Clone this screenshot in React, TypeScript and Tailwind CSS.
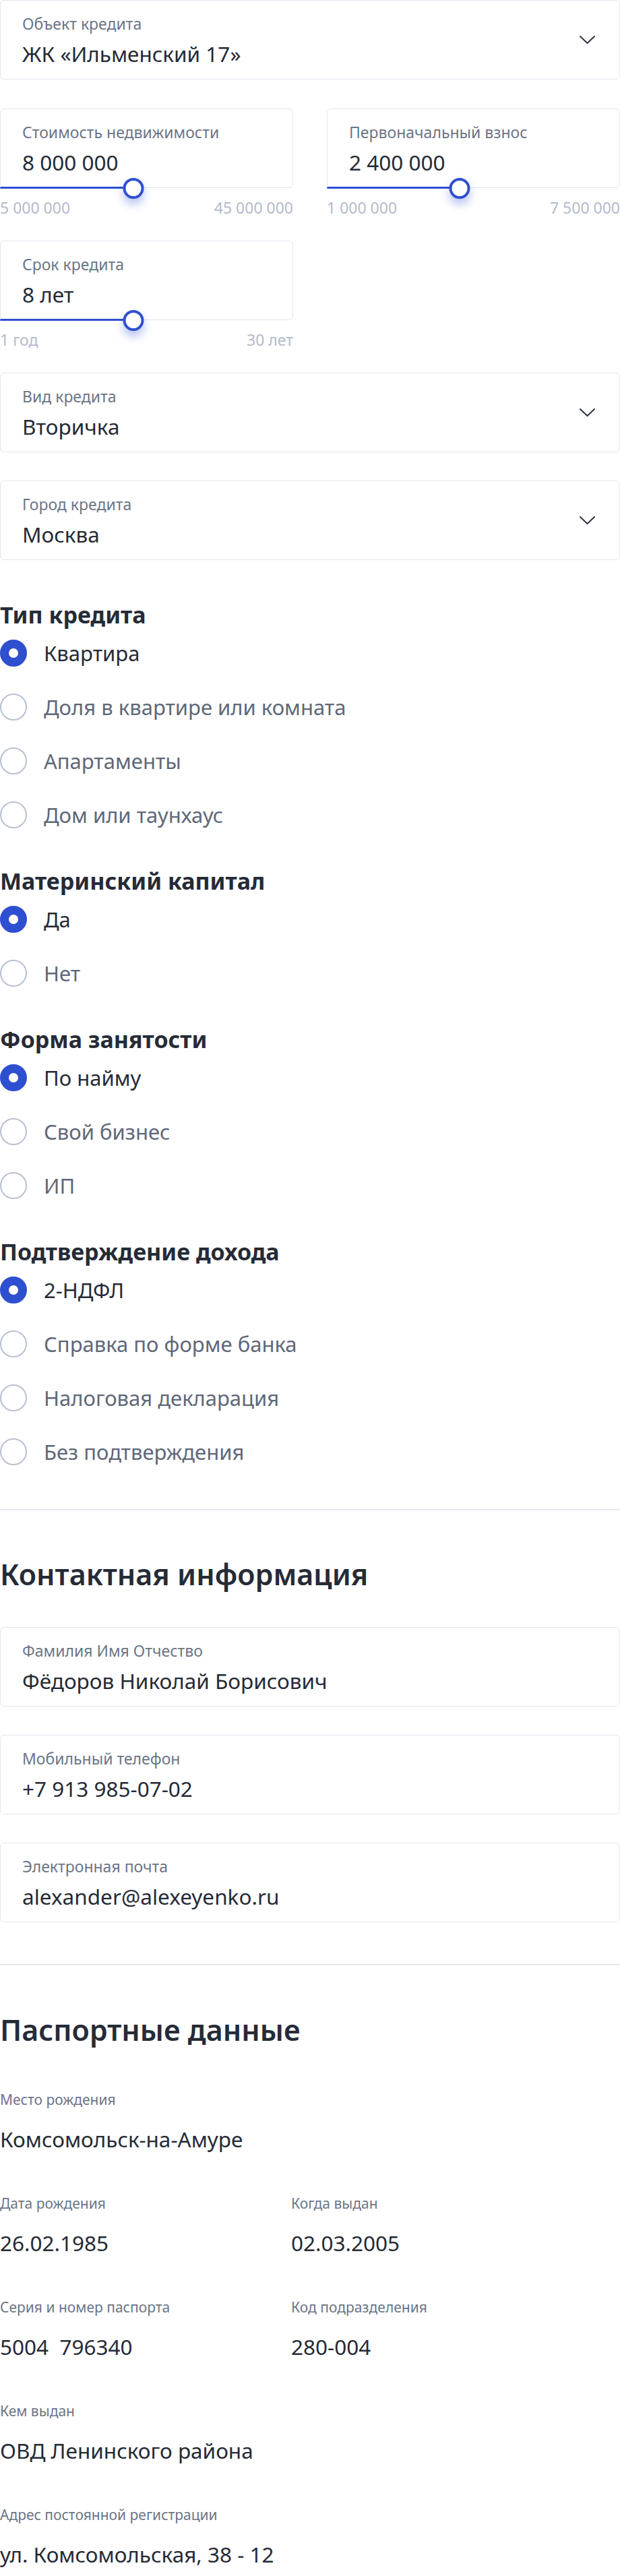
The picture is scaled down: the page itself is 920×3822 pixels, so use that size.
import React from "react";

const font = { fontFamily: '"Noto Sans", "Open Sans", sans-serif' };

function Chevron() {
  return (
    <svg width="23" height="12" viewBox="0 0 23 12" fill="none" className="shrink-0">
      <path d="M1 1L11.5 11L22 1" stroke="#2d3340" strokeWidth="2" strokeLinecap="round" strokeLinejoin="round" />
    </svg>
  );
}

function Field({ label, value, select = false }: { label: string; value: string; select?: boolean }) {
  return (
    <div className="flex h-[118px] items-center justify-between rounded-md border border-[#e1e5ee] bg-white pl-8 pr-[36px]">
      <div className="mt-[3px] flex flex-col">
        <span className="text-[23px] leading-[30px] text-[#6b7586]">{label}</span>
        <span className="mt-[9px] text-[31.5px] leading-[42px] text-[#262b36]">{value}</span>
      </div>
      {select && <Chevron />}
    </div>
  );
}

function SliderField({
  label,
  value,
  min,
  max,
  fraction,
}: {
  label: string;
  value: string;
  min: string;
  max: string;
  fraction: number;
}) {
  const pct = `${fraction * 100}%`;
  return (
    <div className="flex flex-col">
      <div className="relative">
        <Field label={label} value={value} />
        <div className="absolute bottom-[-1px] left-0 h-[3px] rounded-full bg-[#2f4fd1]" style={{ width: pct }} />
        <div
          className="absolute bottom-[-16px] h-[31px] w-[31px] -translate-x-1/2 rounded-full border-[4px] border-[#2f4fd1] bg-white shadow-[0_8px_14px_rgba(47,79,209,0.35)]"
          style={{ left: pct }}
        />
      </div>
      <div className="mt-[14px] flex justify-between text-[23px] leading-[30px] text-[#b3bbca]">
        <span>{min}</span>
        <span>{max}</span>
      </div>
    </div>
  );
}

function Radio({ label, checked }: { label: string; checked: boolean }) {
  return (
    <div className="flex h-[80px] items-center gap-[25px]">
      {checked ? (
        <span className="h-[40px] w-[40px] shrink-0 rounded-full border-[13px] border-[#2f4fd1] bg-white" />
      ) : (
        <span className="h-[40px] w-[40px] shrink-0 rounded-full border-2 border-[#b9c1d0] bg-white" />
      )}
      <span className={`text-[31px] leading-[40px] ${checked ? "text-[#262b36]" : "text-[#5f6878]"}`}>{label}</span>
    </div>
  );
}

function RadioGroup({ title, options, selected, first = false }: { title: string; options: string[]; selected: number; first?: boolean }) {
  return (
    <div className={first ? "mt-[64px]" : "mt-[41px]"}>
      <h3 className="text-[34px] font-bold leading-[34px] text-[#262b36]">{title}</h3>
      {options.map((o, i) => (
        <Radio key={o} label={o} checked={i === selected} />
      ))}
    </div>
  );
}

function Info({ label, value }: { label: string; value: string }) {
  return (
    <div className="flex flex-col">
      <span className="text-[21px] leading-[28px] text-[#6b7586]">{label}</span>
      <span className="mt-[25px] whitespace-pre text-[31.5px] leading-[40px] text-[#262b36]">{value}</span>
    </div>
  );
}

export default function App() {
  return (
    <div className="w-[920px] bg-white pb-[14px]" style={font}>
      <Field label="Объект кредита" value="ЖК «Ильменский 17»" select />

      <div className="mt-[43px] grid grid-cols-2 gap-x-[50px]">
        <SliderField label="Стоимость недвижимости" value="8 000 000" min="5 000 000" max="45 000 000" fraction={0.455} />
        <SliderField label="Первоначальный взнос" value="2 400 000" min="1 000 000" max="7 500 000" fraction={0.453} />
      </div>

      <div className="mt-[34px] grid grid-cols-2 gap-x-[50px]">
        <SliderField label="Срок кредита" value="8 лет" min="1 год" max="30 лет" fraction={0.455} />
      </div>

      <div className="mt-[34px]">
        <Field label="Вид кредита" value="Вторичка" select />
      </div>
      <div className="mt-[42px]">
        <Field label="Город кредита" value="Москва" select />
      </div>

      <RadioGroup
        first
        title="Тип кредита"
        options={["Квартира", "Доля в квартире или комната", "Апартаменты", "Дом или таунхаус"]}
        selected={0}
      />
      <RadioGroup title="Материнский капитал" options={["Да", "Нет"]} selected={0} />
      <RadioGroup title="Форма занятости" options={["По найму", "Свой бизнес", "ИП"]} selected={0} />
      <RadioGroup
        title="Подтверждение дохода"
        options={["2-НДФЛ", "Справка по форме банка", "Налоговая декларация", "Без подтверждения"]}
        selected={0}
      />

      <div className="mt-[45px] h-[2px] bg-[#e6e9f0]" />

      <h2 className="mt-[67px] text-[43px] font-semibold leading-[56px] text-[#262b36]">Контактная информация</h2>
      <div className="mt-[50px] flex flex-col gap-[42px]">
        <Field label="Фамилия Имя Отчество" value="Фёдоров Николай Борисович" />
        <Field label="Мобильный телефон" value="+7 913 985-07-02" />
        <Field label="Электронная почта" value="alexander@alexeyenko.ru" />
      </div>

      <div className="mt-[62px] h-[2px] bg-[#e6e9f0]" />

      <h2 className="mt-[68px] text-[43px] font-semibold leading-[56px] text-[#262b36]">Паспортные данные</h2>
      <div className="mt-[61px] grid grid-cols-[432px_1fr] gap-y-[61px]">
        <div className="col-span-2">
          <Info label="Место рождения" value="Комсомольск-на-Амуре" />
        </div>
        <Info label="Дата рождения" value="26.02.1985" />
        <Info label="Когда выдан" value="02.03.2005" />
        <Info label="Серия и номер паспорта" value="5004  796340" />
        <Info label="Код подразделения" value="280-004" />
        <div className="col-span-2">
          <Info label="Кем выдан" value="ОВД Ленинского района" />
        </div>
        <div className="col-span-2">
          <Info label="Адрес постоянной регистрации" value="ул. Комсомольская, 38 - 12" />
        </div>
      </div>
    </div>
  );
}
